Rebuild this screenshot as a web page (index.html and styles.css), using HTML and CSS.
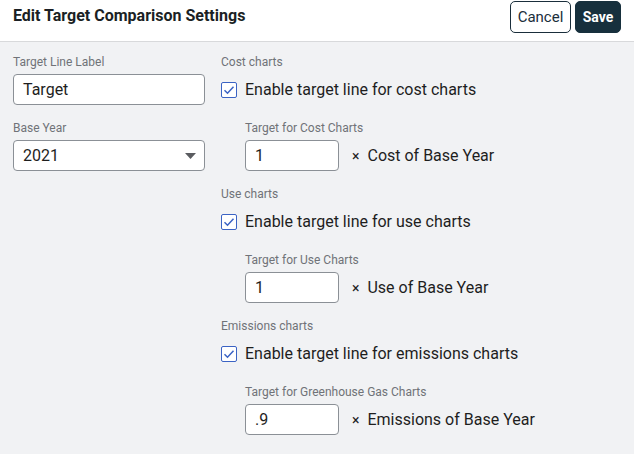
FILE: index.html
```html
<!DOCTYPE html>
<html>
<head>
<meta charset="utf-8">
<link rel="stylesheet" href="styles.css">
</head>
<body>
<div class="dialog">
  <header class="header">
    <h1 class="title">Edit Target Comparison Settings</h1>
    <div class="actions">
      <button class="btn btn-cancel">Cancel</button>
      <button class="btn btn-save">Save</button>
    </div>
  </header>
  <main class="content">
    <div class="col-left">
      <div class="field">
        <div class="label">Target Line Label</div>
        <div class="input wide">Target</div>
      </div>
      <div class="field">
        <div class="label">Base Year</div>
        <div class="input wide select">
          <span>2021</span>
          <svg class="arrow" width="11" height="6" viewBox="0 0 11 6"><path d="M0 0h11L5.5 6z" fill="#5a5c60"/></svg>
        </div>
      </div>
    </div>
    <div class="col-right">
      <section class="section">
        <div class="label">Cost charts</div>
        <label class="check-row">
          <span class="checkbox"><svg width="12" height="10" viewBox="0 0 12 10"><path d="M1.5 5.2l3 3 6-6.4" fill="none" stroke="#3b63c4" stroke-width="1.5"/></svg></span>
          <span>Enable target line for cost charts</span>
        </label>
        <div class="sub">
          <div class="label">Target for Cost Charts</div>
          <div class="mult-row">
            <div class="input narrow">1</div>
            <span class="times">×</span>
            <span>Cost of Base Year</span>
          </div>
        </div>
      </section>
      <section class="section">
        <div class="label">Use charts</div>
        <label class="check-row">
          <span class="checkbox"><svg width="12" height="10" viewBox="0 0 12 10"><path d="M1.5 5.2l3 3 6-6.4" fill="none" stroke="#3b63c4" stroke-width="1.5"/></svg></span>
          <span>Enable target line for use charts</span>
        </label>
        <div class="sub">
          <div class="label">Target for Use Charts</div>
          <div class="mult-row">
            <div class="input narrow">1</div>
            <span class="times">×</span>
            <span>Use of Base Year</span>
          </div>
        </div>
      </section>
      <section class="section">
        <div class="label">Emissions charts</div>
        <label class="check-row">
          <span class="checkbox"><svg width="12" height="10" viewBox="0 0 12 10"><path d="M1.5 5.2l3 3 6-6.4" fill="none" stroke="#3b63c4" stroke-width="1.5"/></svg></span>
          <span>Enable target line for emissions charts</span>
        </label>
        <div class="sub">
          <div class="label">Target for Greenhouse Gas Charts</div>
          <div class="mult-row">
            <div class="input narrow">.9</div>
            <span class="times">×</span>
            <span>Emissions of Base Year</span>
          </div>
        </div>
      </section>
    </div>
  </main>
</div>
</body>
</html>
```
FILE: styles.css
```css
* { box-sizing: border-box; }
html, body {
  margin: 0;
  padding: 0;
  background: #f1f2f4;
  font-family: Roboto, "Liberation Sans", sans-serif;
  color: #222;
}
.dialog {
  width: 634px;
  min-height: 454px;
  background: #f1f2f4;
}
.header {
  display: flex;
  align-items: center;
  justify-content: space-between;
  height: 42px;
  padding: 1px 13px 8px;
  background: #fff;
  border-bottom: 1px solid #d8d9db;
}
.title {
  margin: 0 0 3px;
  font-size: 16px;
  font-weight: 700;
  color: #1b1f24;
}
.actions {
  display: flex;
  gap: 4px;
}
.btn {
  height: 32px;
  padding: 0;
  font-family: Roboto, "Liberation Sans", sans-serif;
  font-size: 15px;
  border-radius: 5px;
  cursor: pointer;
}
.btn-cancel {
  background: #fff;
  color: #1a2e3b;
  border: 1px solid #1a2e3b;
  width: 61px;
}
.btn-save {
  background: #17303d;
  color: #fff;
  border: 1px solid #17303d;
  font-size: 14px;
  font-weight: 700;
  width: 46px;
}
.content {
  display: flex;
  gap: 16px;
  padding: 12px 13px 0;
}
.col-left {
  width: 192px;
  display: flex;
  flex-direction: column;
  gap: 15px;
}
.label {
  font-size: 12px;
  line-height: 16px;
  color: #707378;
}
.field .label { margin-bottom: 4px; }
.input {
  height: 31px;
  background: #fff;
  border: 1px solid #8b9096;
  border-radius: 4px;
  font-size: 16px;
  line-height: 29px;
  padding: 0 9px;
  color: #1e1e1e;
}
.wide { width: 192px; }
.select {
  display: flex;
  align-items: center;
  justify-content: space-between;
  padding-right: 8px;
}
.col-right {
  display: flex;
  flex-direction: column;
  gap: 15px;
}
.check-row {
  display: flex;
  align-items: center;
  gap: 8px;
  margin-top: 8px;
  font-size: 16px;
  line-height: 24px;
  color: #1e1e1e;
}
.checkbox {
  width: 16px;
  height: 16px;
  border: 1.5px solid #3b63c4;
  border-radius: 2px;
  display: flex;
  align-items: center;
  justify-content: center;
  background: #fff;
}
.sub {
  padding-left: 24px;
  margin-top: 18px;
}
.sub .label { margin-bottom: 4px; }
.mult-row {
  display: flex;
  align-items: center;
  font-size: 16px;
  color: #1e1e1e;
}
.narrow { width: 94px; }
.times {
  margin: 0 8px 0 13px;
  font-size: 14px;
}
```
